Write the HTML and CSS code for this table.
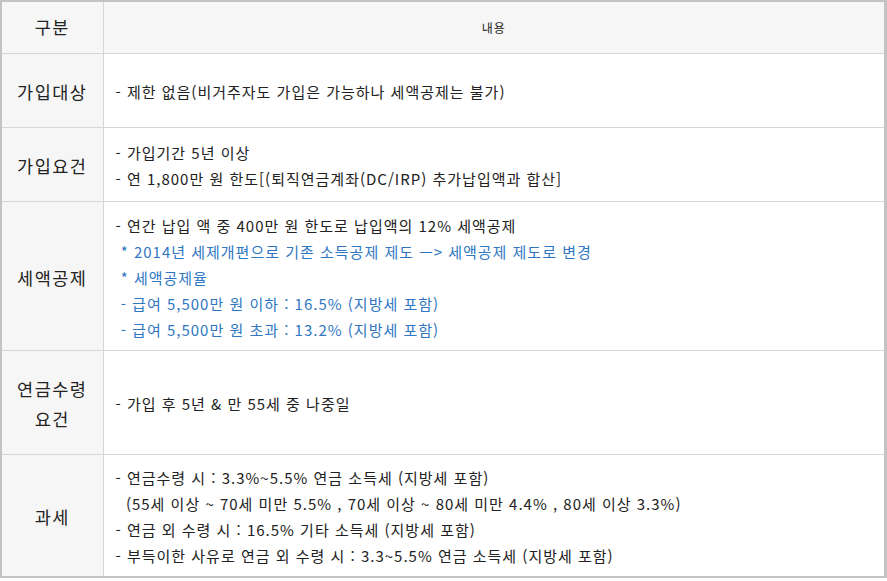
FILE: index.html
```html
<!DOCTYPE html>
<html lang="ko">
<head>
<meta charset="utf-8">
<link rel="stylesheet" href="styles.css">
</head>
<body>
<table class="info">
  <colgroup><col class="c1"><col class="c2"></colgroup>
  <tr class="r-head">
    <th class="label">구분</th>
    <th class="head">내용</th>
  </tr>
  <tr class="r1">
    <td class="label shift">가입대상</td>
    <td class="body"><p>- 제한 없음(비거주자도 가입은 가능하나 세액공제는 불가)</p></td>
  </tr>
  <tr class="r2">
    <td class="label shift">가입요건</td>
    <td class="body"><p>- 가입기간 5년 이상</p><p>- 연 1,800만 원 한도[(퇴직연금계좌(DC/IRP) 추가납입액과 합산]</p></td>
  </tr>
  <tr class="r3">
    <td class="label shift">세액공제</td>
    <td class="body">
      <p>- 연간 납입 액 중 400만 원 한도로 납입액의 12% 세액공제</p>
      <p class="blue"> * 2014년 세제개편으로 기존 소득공제 제도 —&gt; 세액공제 제도로 변경</p>
      <p class="blue"> * 세액공제율</p>
      <p class="blue"> - 급여 5,500만 원 이하 : 16.5% (지방세 포함)</p>
      <p class="blue"> - 급여 5,500만 원 초과 : 13.2% (지방세 포함)</p>
    </td>
  </tr>
  <tr class="r4">
    <td class="label shift">연금수령<br>요건</td>
    <td class="body"><p>- 가입 후 5년 &amp; 만 55세 중 나중일</p></td>
  </tr>
  <tr class="r5">
    <td class="label shift">과세</td>
    <td class="body">
      <p>- 연금수령 시 : 3.3%~5.5% 연금 소득세 (지방세 포함)</p>
      <p>  (55세 이상 ~ 70세 미만 5.5% , 70세 이상 ~ 80세 미만 4.4% , 80세 이상 3.3%)</p>
      <p>- 연금 외 수령 시 : 16.5% 기타 소득세 (지방세 포함)</p>
      <p>- 부득이한 사유로 연금 외 수령 시 : 3.3~5.5% 연금 소득세 (지방세 포함)</p>
    </td>
  </tr>
</table>
</body>
</html>
```

FILE: styles.css
```css
html, body {
  margin: 0;
  padding: 0;
  background: #ffffff;
}

body {
  font-family: "Noto Sans CJK KR", "Noto Sans", sans-serif;
  color: #222222;
}

.info {
  width: 887px;
  border-collapse: collapse;
  border: 2px solid #c3c3c3;
  border-right-width: 3px;
  table-layout: fixed;
}

.c1 { width: 102px; }

.info th,
.info td {
  border: 1px solid #d6d6d6;
  padding: 0;
  font-weight: normal;
  vertical-align: middle;
}

.label {
  background: #f6f6f6;
  text-align: center;
  font-size: 17.5px;
  letter-spacing: 1.5px;
  line-height: 30px;
  color: #222222;
}

.info .shift {
  padding-top: 4px;
}

.head {
  background: #f6f6f6;
  text-align: center;
  font-size: 12px;
  letter-spacing: 1px;
}

.info .body {
  padding: 4px 12px 0 12px;
  font-size: 15px;
  letter-spacing: 1px;
  line-height: 26px;
  text-align: left;
}

.body p {
  margin: 0;
  white-space: pre;
}

.blue { color: #2f77c2; }

.r-head { height: 52px; }
.r1 { height: 74px; }
.r2 { height: 74px; }
.r3 { height: 149px; }
.r4 { height: 104px; }
.r5 { height: 123px; }
```
